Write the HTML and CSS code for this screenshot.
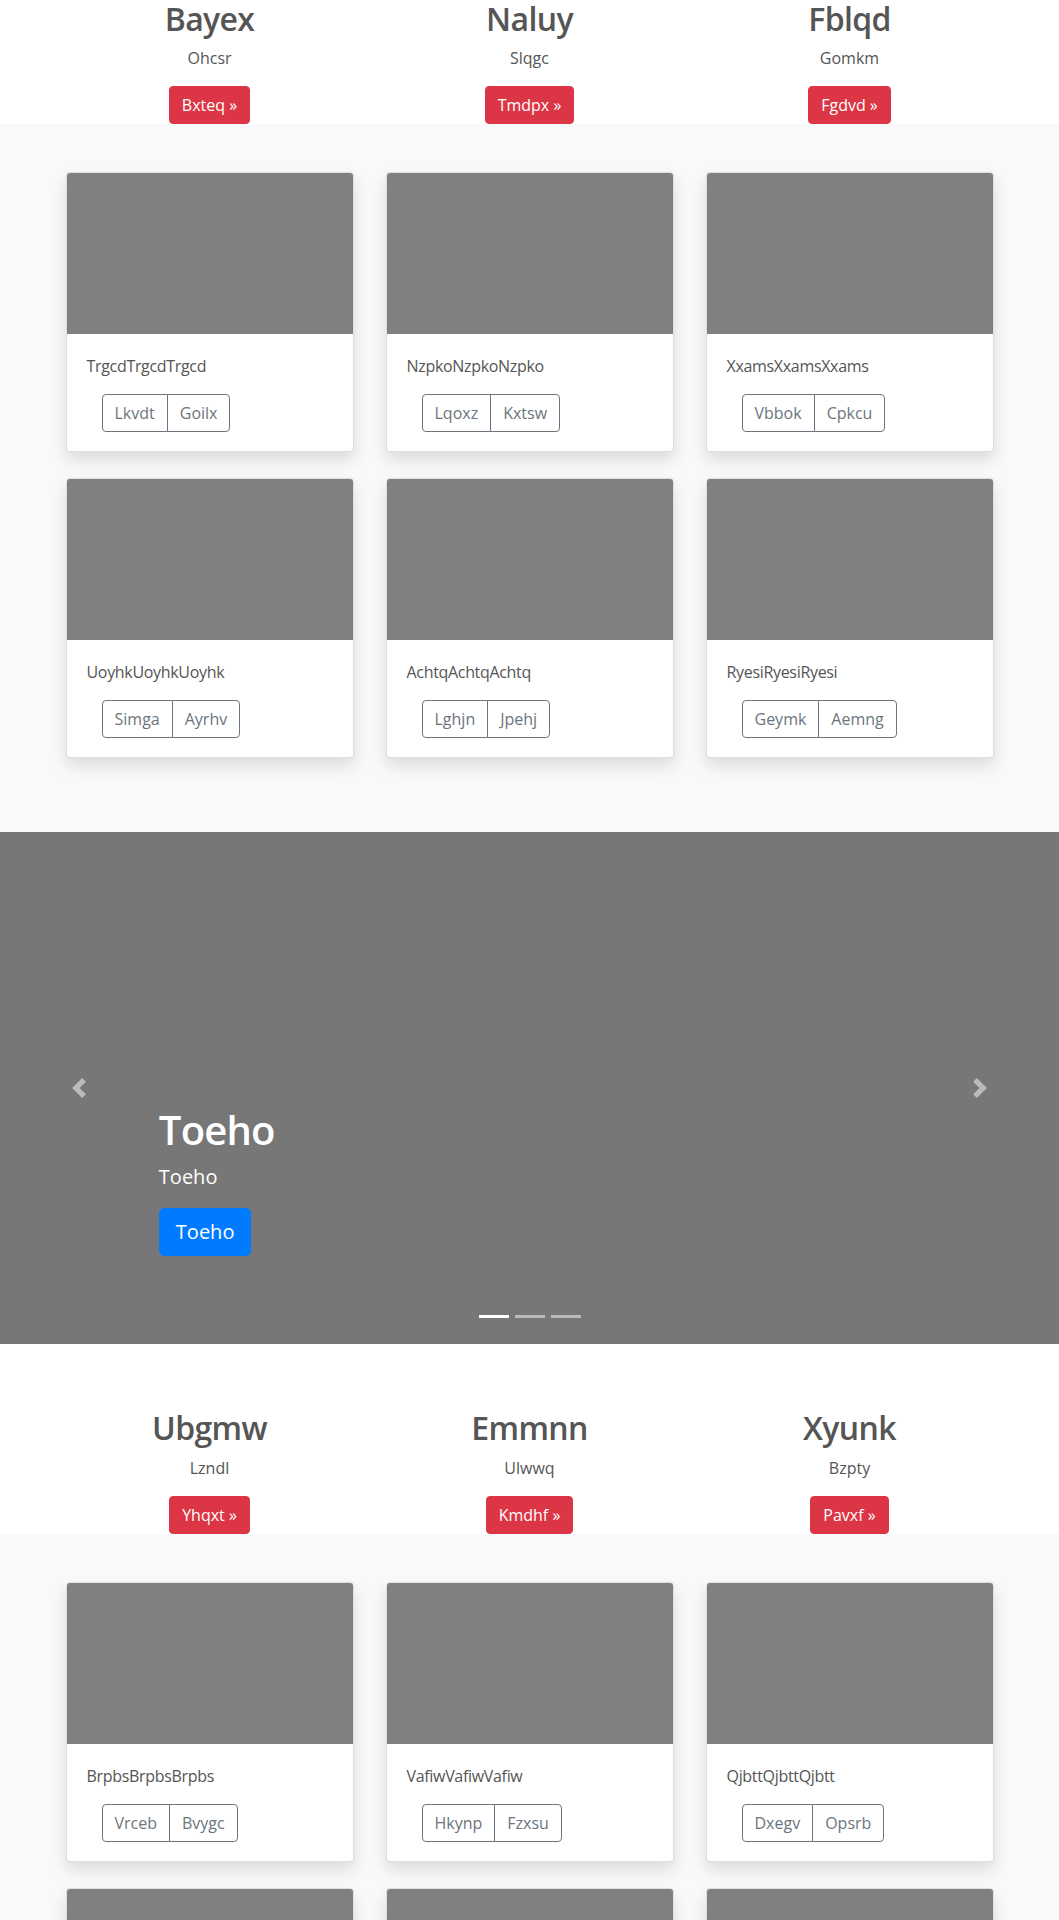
FILE: index.html
```html
<!DOCTYPE html>
<html lang="en">
<head>
<meta charset="utf-8">
<title>Page</title>
<link rel="stylesheet" href="styles.css">
</head>
<body>
<main>
  <section class="marketing">
    <div class="container features">
      <div class="feature">
        <h2>Bayex</h2>
        <p>Ohcsr</p>
        <p class="action"><a class="btn btn-danger" href="#">Bxteq &raquo;</a></p>
      </div>
      <div class="feature">
        <h2>Naluy</h2>
        <p>Slqgc</p>
        <p class="action"><a class="btn btn-danger" href="#">Tmdpx &raquo;</a></p>
      </div>
      <div class="feature">
        <h2>Fblqd</h2>
        <p>Gomkm</p>
        <p class="action"><a class="btn btn-danger" href="#">Fgdvd &raquo;</a></p>
      </div>
    </div>
  </section>

  <section class="album">
    <div class="container cards">
      <div class="card">
        <div class="card-img"></div>
        <div class="card-body">
          <p class="card-text">TrgcdTrgcdTrgcd</p>
          <div class="btn-group"><button class="btn btn-outline">Lkvdt</button><button class="btn btn-outline">Goilx</button></div>
        </div>
      </div>
      <div class="card">
        <div class="card-img"></div>
        <div class="card-body">
          <p class="card-text">NzpkoNzpkoNzpko</p>
          <div class="btn-group"><button class="btn btn-outline">Lqoxz</button><button class="btn btn-outline">Kxtsw</button></div>
        </div>
      </div>
      <div class="card">
        <div class="card-img"></div>
        <div class="card-body">
          <p class="card-text">XxamsXxamsXxams</p>
          <div class="btn-group"><button class="btn btn-outline">Vbbok</button><button class="btn btn-outline">Cpkcu</button></div>
        </div>
      </div>
      <div class="card">
        <div class="card-img"></div>
        <div class="card-body">
          <p class="card-text">UoyhkUoyhkUoyhk</p>
          <div class="btn-group"><button class="btn btn-outline">Simga</button><button class="btn btn-outline">Ayrhv</button></div>
        </div>
      </div>
      <div class="card">
        <div class="card-img"></div>
        <div class="card-body">
          <p class="card-text">AchtqAchtqAchtq</p>
          <div class="btn-group"><button class="btn btn-outline">Lghjn</button><button class="btn btn-outline">Jpehj</button></div>
        </div>
      </div>
      <div class="card">
        <div class="card-img"></div>
        <div class="card-body">
          <p class="card-text">RyesiRyesiRyesi</p>
          <div class="btn-group"><button class="btn btn-outline">Geymk</button><button class="btn btn-outline">Aemng</button></div>
        </div>
      </div>
    </div>
  </section>

  <section class="carousel">
    <ol class="indicators">
      <li class="active"></li>
      <li></li>
      <li></li>
    </ol>
    <div class="caption">
      <h1>Toeho</h1>
      <p class="lead">Toeho</p>
      <p class="action"><a class="btn btn-lg btn-primary" href="#">Toeho</a></p>
    </div>
    <a class="control control-prev" href="#" aria-label="Previous">
      <svg width="20" height="20" viewBox="0 0 8 8" fill="#fff"><path d="M5.25 0l-4 4 4 4 1.5-1.5L4.25 4l2.5-2.5L5.25 0z"/></svg>
    </a>
    <a class="control control-next" href="#" aria-label="Next">
      <svg width="20" height="20" viewBox="0 0 8 8" fill="#fff"><path d="M2.75 0l-1.5 1.5L3.75 4l-2.5 2.5L2.75 8l4-4-4-4z"/></svg>
    </a>
  </section>

  <section class="marketing">
    <div class="container features">
      <div class="feature">
        <h2>Ubgmw</h2>
        <p>Lzndl</p>
        <p class="action"><a class="btn btn-danger" href="#">Yhqxt &raquo;</a></p>
      </div>
      <div class="feature">
        <h2>Emmnn</h2>
        <p>Ulwwq</p>
        <p class="action"><a class="btn btn-danger" href="#">Kmdhf &raquo;</a></p>
      </div>
      <div class="feature">
        <h2>Xyunk</h2>
        <p>Bzpty</p>
        <p class="action"><a class="btn btn-danger" href="#">Pavxf &raquo;</a></p>
      </div>
    </div>
  </section>

  <section class="album">
    <div class="container cards">
      <div class="card">
        <div class="card-img"></div>
        <div class="card-body">
          <p class="card-text">BrpbsBrpbsBrpbs</p>
          <div class="btn-group"><button class="btn btn-outline">Vrceb</button><button class="btn btn-outline">Bvygc</button></div>
        </div>
      </div>
      <div class="card">
        <div class="card-img"></div>
        <div class="card-body">
          <p class="card-text">VafiwVafiwVafiw</p>
          <div class="btn-group"><button class="btn btn-outline">Hkynp</button><button class="btn btn-outline">Fzxsu</button></div>
        </div>
      </div>
      <div class="card">
        <div class="card-img"></div>
        <div class="card-body">
          <p class="card-text">QjbttQjbttQjbtt</p>
          <div class="btn-group"><button class="btn btn-outline">Dxegv</button><button class="btn btn-outline">Opsrb</button></div>
        </div>
      </div>
      <div class="card">
        <div class="card-img"></div>
        <div class="card-body">
          <p class="card-text">MlotrMlotrMlotr</p>
          <div class="btn-group"><button class="btn btn-outline">Wenal</button><button class="btn btn-outline">Utrop</button></div>
        </div>
      </div>
      <div class="card">
        <div class="card-img"></div>
        <div class="card-body">
          <p class="card-text">KesdiKesdiKesdi</p>
          <div class="btn-group"><button class="btn btn-outline">Pomsa</button><button class="btn btn-outline">Ribet</button></div>
        </div>
      </div>
      <div class="card">
        <div class="card-img"></div>
        <div class="card-body">
          <p class="card-text">GawelGawelGawel</p>
          <div class="btn-group"><button class="btn btn-outline">Tuvma</button><button class="btn btn-outline">Lorke</button></div>
        </div>
      </div>
    </div>
  </section>
</main>
</body>
</html>
```

FILE: styles.css
```css
* {
  box-sizing: border-box;
}

body {
  margin: 0;
  font-family: "Open Sans", "Noto Sans", "Liberation Sans", sans-serif;
  font-size: 16px;
  line-height: 1.5;
  color: #555;
  background: #fff;
}

.container {
  width: 960px;
  margin: 0 auto;
}

/* marketing columns */
.features {
  display: grid;
  grid-template-columns: repeat(3, 1fr);
  text-align: center;
}

.feature h2 {
  margin: 0 0 8px;
  font-size: 32px;
  font-weight: 600;
  line-height: 1.2;
  letter-spacing: -0.02em;
  color: #555;
}

.feature p {
  margin: 0 0 16px;
  color: #555;
}

.feature .action {
  margin: 0;
}

/* buttons */
.btn {
  display: inline-block;
  padding: 6px 12px;
  font-family: inherit;
  font-size: 16px;
  font-weight: 400;
  line-height: 24px;
  text-align: center;
  text-decoration: none;
  border: 1px solid transparent;
  border-radius: 4px;
  background: transparent;
  cursor: pointer;
}

.btn-danger {
  color: #fff;
  background: #dc3545;
  border-color: #dc3545;
}

.btn-primary {
  color: #fff;
  background: #007bff;
  border-color: #007bff;
}

.btn-lg {
  padding: 8px 16px;
  font-size: 20px;
  line-height: 30px;
  border-radius: 5px;
}

.btn-outline {
  color: #6c757d;
  border-color: #6c757d;
}

/* album */
.album {
  background: #f8f9fa;
  padding: 48px 0 74px;
}

.cards {
  display: grid;
  grid-template-columns: repeat(3, 288px);
  column-gap: 32px;
  row-gap: 26px;
  padding: 0 16px;
}

.card {
  background: #fff;
  border: 1px solid rgba(0, 0, 0, 0.125);
  border-radius: 4px;
  overflow: hidden;
  box-shadow: 0 8px 16px rgba(0, 0, 0, 0.12);
}

.card-img {
  height: 161px;
  background: #808080;
}

.card-body {
  padding: 20px 20px 19px;
}

.card-text {
  margin: 0 0 16px;
  color: #555;
  letter-spacing: -0.02em;
}

.btn-group {
  display: inline-flex;
  margin-left: 15px;
}

.btn-group .btn:first-child {
  border-top-right-radius: 0;
  border-bottom-right-radius: 0;
}

.btn-group .btn + .btn {
  margin-left: -1px;
  border-top-left-radius: 0;
  border-bottom-left-radius: 0;
}

/* carousel */
.carousel {
  position: relative;
  height: 512px;
  margin-bottom: 65px;
  background: #777;
  overflow: hidden;
}

.caption {
  position: absolute;
  left: 15%;
  right: 15%;
  bottom: 52px;
  padding: 20px 0;
  color: #fff;
  text-align: left;
  z-index: 10;
}

.caption h1 {
  margin: 0 0 8px;
  font-size: 40px;
  font-weight: 600;
  line-height: 1.2;
  letter-spacing: -0.02em;
}

.caption .lead {
  margin: 0 0 16px;
  font-size: 20px;
  font-weight: 400;
  line-height: 1.5;
}

.caption .action {
  margin: 0 0 16px;
}

.control {
  position: absolute;
  top: 0;
  bottom: 0;
  width: 15%;
  display: flex;
  align-items: center;
  justify-content: center;
  opacity: 0.5;
  z-index: 5;
}

.control-prev {
  left: 0;
}

.control-next {
  right: 0;
}

.control svg {
  display: block;
}

.indicators {
  position: absolute;
  left: 0;
  right: 0;
  bottom: 0;
  margin: 0 0 16px;
  padding: 0;
  list-style: none;
  display: flex;
  justify-content: center;
  z-index: 15;
}

.indicators li {
  width: 30px;
  height: 3px;
  margin: 0 3px;
  box-sizing: content-box;
  border-top: 10px solid transparent;
  border-bottom: 10px solid transparent;
  background: #fff;
  background-clip: padding-box;
  opacity: 0.5;
}

.indicators li.active {
  opacity: 1;
}
```
